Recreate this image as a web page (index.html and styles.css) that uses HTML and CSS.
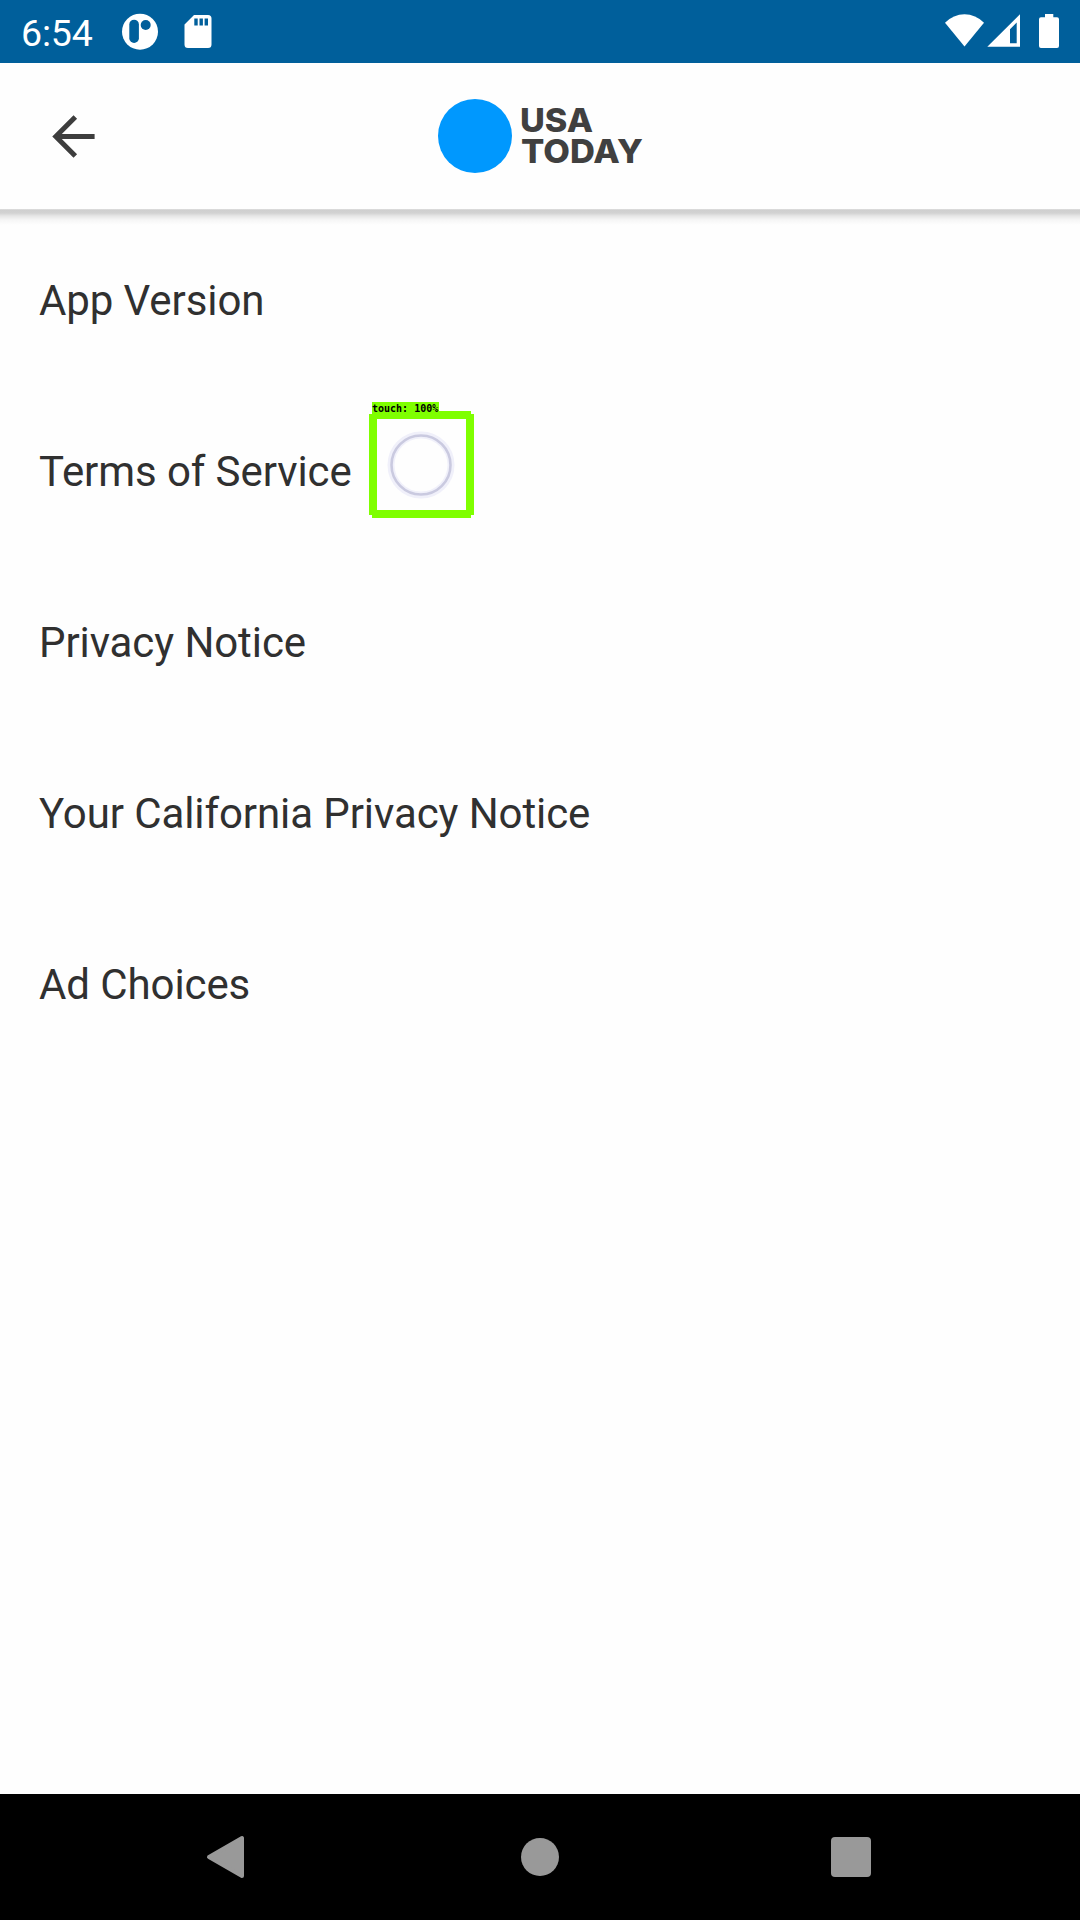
FILE: index.html
```html
<!DOCTYPE html>
<html lang="en">
<head>
<meta charset="utf-8">
<title>USA TODAY</title>
<link rel="stylesheet" href="styles.css">
</head>
<body>
<div class="status-bar">
  <span class="clock">6:54</span>
  <svg class="status-left" width="96" height="63" viewBox="120 0 96 63">
    <circle cx="140" cy="31.7" r="18" fill="#fff"/>
    <rect x="129.3" y="19.7" width="9.6" height="23.3" rx="4.8" fill="#005f9b"/>
    <circle cx="145.7" cy="25" r="5" fill="#005f9b"/>
    <path d="M194 15h14a3.5 3.5 0 0 1 3.5 3.5v26a3.5 3.5 0 0 1-3.5 3.5h-20a3.5 3.5 0 0 1-3.5-3.5V24.500z" fill="#fff"/>
    <path d="M194.300 18.500h3.400v7h-3.400zM199.500 18.500h3.400v7h-3.400zM204.600 18.500h3.400v7h-3.400z" fill="#005f9b"/>
  </svg>
  <svg class="status-right" width="124" height="63" viewBox="940 0 124 63">
    <path d="M945 22.700Q953.500 14.200 964.500 14.200T984 22.700L964.500 46.500z" fill="#fff"/>
    <path fill-rule="evenodd" d="M1020 14.300V46.700H987.300zM1016.700 22.500L1010 29.200V43.300h6.700z" fill="#fff"/>
    <path d="M1045 14h8.300v3.300h3.700q2 0 2 2v26.700q0 2-2 2h-16q-2 0-2-2V19.300q0-2 2-2h4z" fill="#fff"/>
  </svg>
</div>
<header class="app-bar">
  <svg class="back" width="44" height="44" viewBox="52 114 44 44" fill="none" stroke="#3d3d3d" stroke-width="5">
    <path d="M94.600 136.500H56M75.300 117L55.800 136.500L75.300 156"/>
  </svg>
  <svg class="logo" width="210" height="76" viewBox="437 98 210 76">
    <circle cx="475" cy="136" r="37" fill="#0098fe"/>
    <g class="logo-text">
      <text x="520" y="132.200" textLength="73" lengthAdjust="spacingAndGlyphs">USA</text>
      <text x="521" y="163" textLength="122" lengthAdjust="spacingAndGlyphs">TODAY</text>
    </g>
  </svg>
</header>
<main class="list">
  <div class="row">App Version</div>
  <div class="row"><span>Terms of Service</span>
    <div class="touch">
      <span class="touch-label">touch: 100%</span>
      <svg width="105" height="107" viewBox="369 411 105 107">
        <path fill="#7fff00" fill-rule="evenodd" d="M372 411H471V414H474V515H471V518H372V515H369V414H372zM377 419V510H466V419z"/>
        <circle cx="421" cy="465" r="30" fill="none" stroke="#f0f0fa" stroke-width="7"/>
        <circle cx="421" cy="465" r="29.500" fill="none" stroke="#cacae0" stroke-width="2.600"/>
      </svg>
    </div>
  </div>
  <div class="row">Privacy Notice</div>
  <div class="row">Your California Privacy Notice</div>
  <div class="row">Ad Choices</div>
</main>
<nav class="nav-bar">
  <svg width="1080" height="126" viewBox="0 1794 1080 126" fill="#999">
    <path d="M209 1857L242 1838V1876z" stroke="#999" stroke-width="4" stroke-linejoin="round"/>
    <circle cx="540" cy="1857" r="19"/>
    <rect x="831" y="1837" width="40" height="40" rx="4"/>
  </svg>
</nav>
</body>
</html>
```
FILE: styles.css
```css
body {
  margin: 0;
  height: 1920px;
  display: flex;
  flex-direction: column;
  background: #fefefe;
  font-family: Roboto, sans-serif;
  overflow: hidden;
}
svg { display: block; }
.status-bar {
  height: 63px;
  flex: none;
  display: flex;
  align-items: center;
  background: #005f9b;
  color: #fff;
}
.clock {
  width: 99px;
  padding: 3px 0 0 21px;
  font-size: 37.500px;
  line-height: 44px;
  letter-spacing: -.2px;
}
.status-right { margin: 0 16px 0 auto; }
.app-bar {
  height: 146px;
  flex: none;
  display: flex;
  align-items: center;
  padding-left: 52px;
  background: #fefefe;
}
.logo { margin-left: 341px; }
.logo-text {
  font-family: Inter, sans-serif;
  font-weight: 800;
  font-size: 33px;
  line-height: 1;
  fill: #404040;
}
.list {
  flex: 1;
  padding-top: 6px;
  background: linear-gradient(#e4e4e4, #cfcfcf 1px, #d2d2d2 4px, #e6e6e6 7px, #f6f6f6 11px, #fefefe 16px);
}
.row {
  height: 171px;
  display: flex;
  align-items: center;
  padding-left: 39px;
  font-size: 42px;
  letter-spacing: -.09px;
  color: #303030;
}
.touch { position: absolute; left: 369px; top: 411px; }
.touch-label {
  position: absolute;
  left: 3px;
  top: -9px;
  width: 67px;
  height: 12px;
  background: #7fff00;
  color: #000;
  font: bold 10px/14px "DejaVu Sans Mono", monospace;
  letter-spacing: 0;
  white-space: pre;
}
.nav-bar { height: 126px; flex: none; background: #000; }
```
